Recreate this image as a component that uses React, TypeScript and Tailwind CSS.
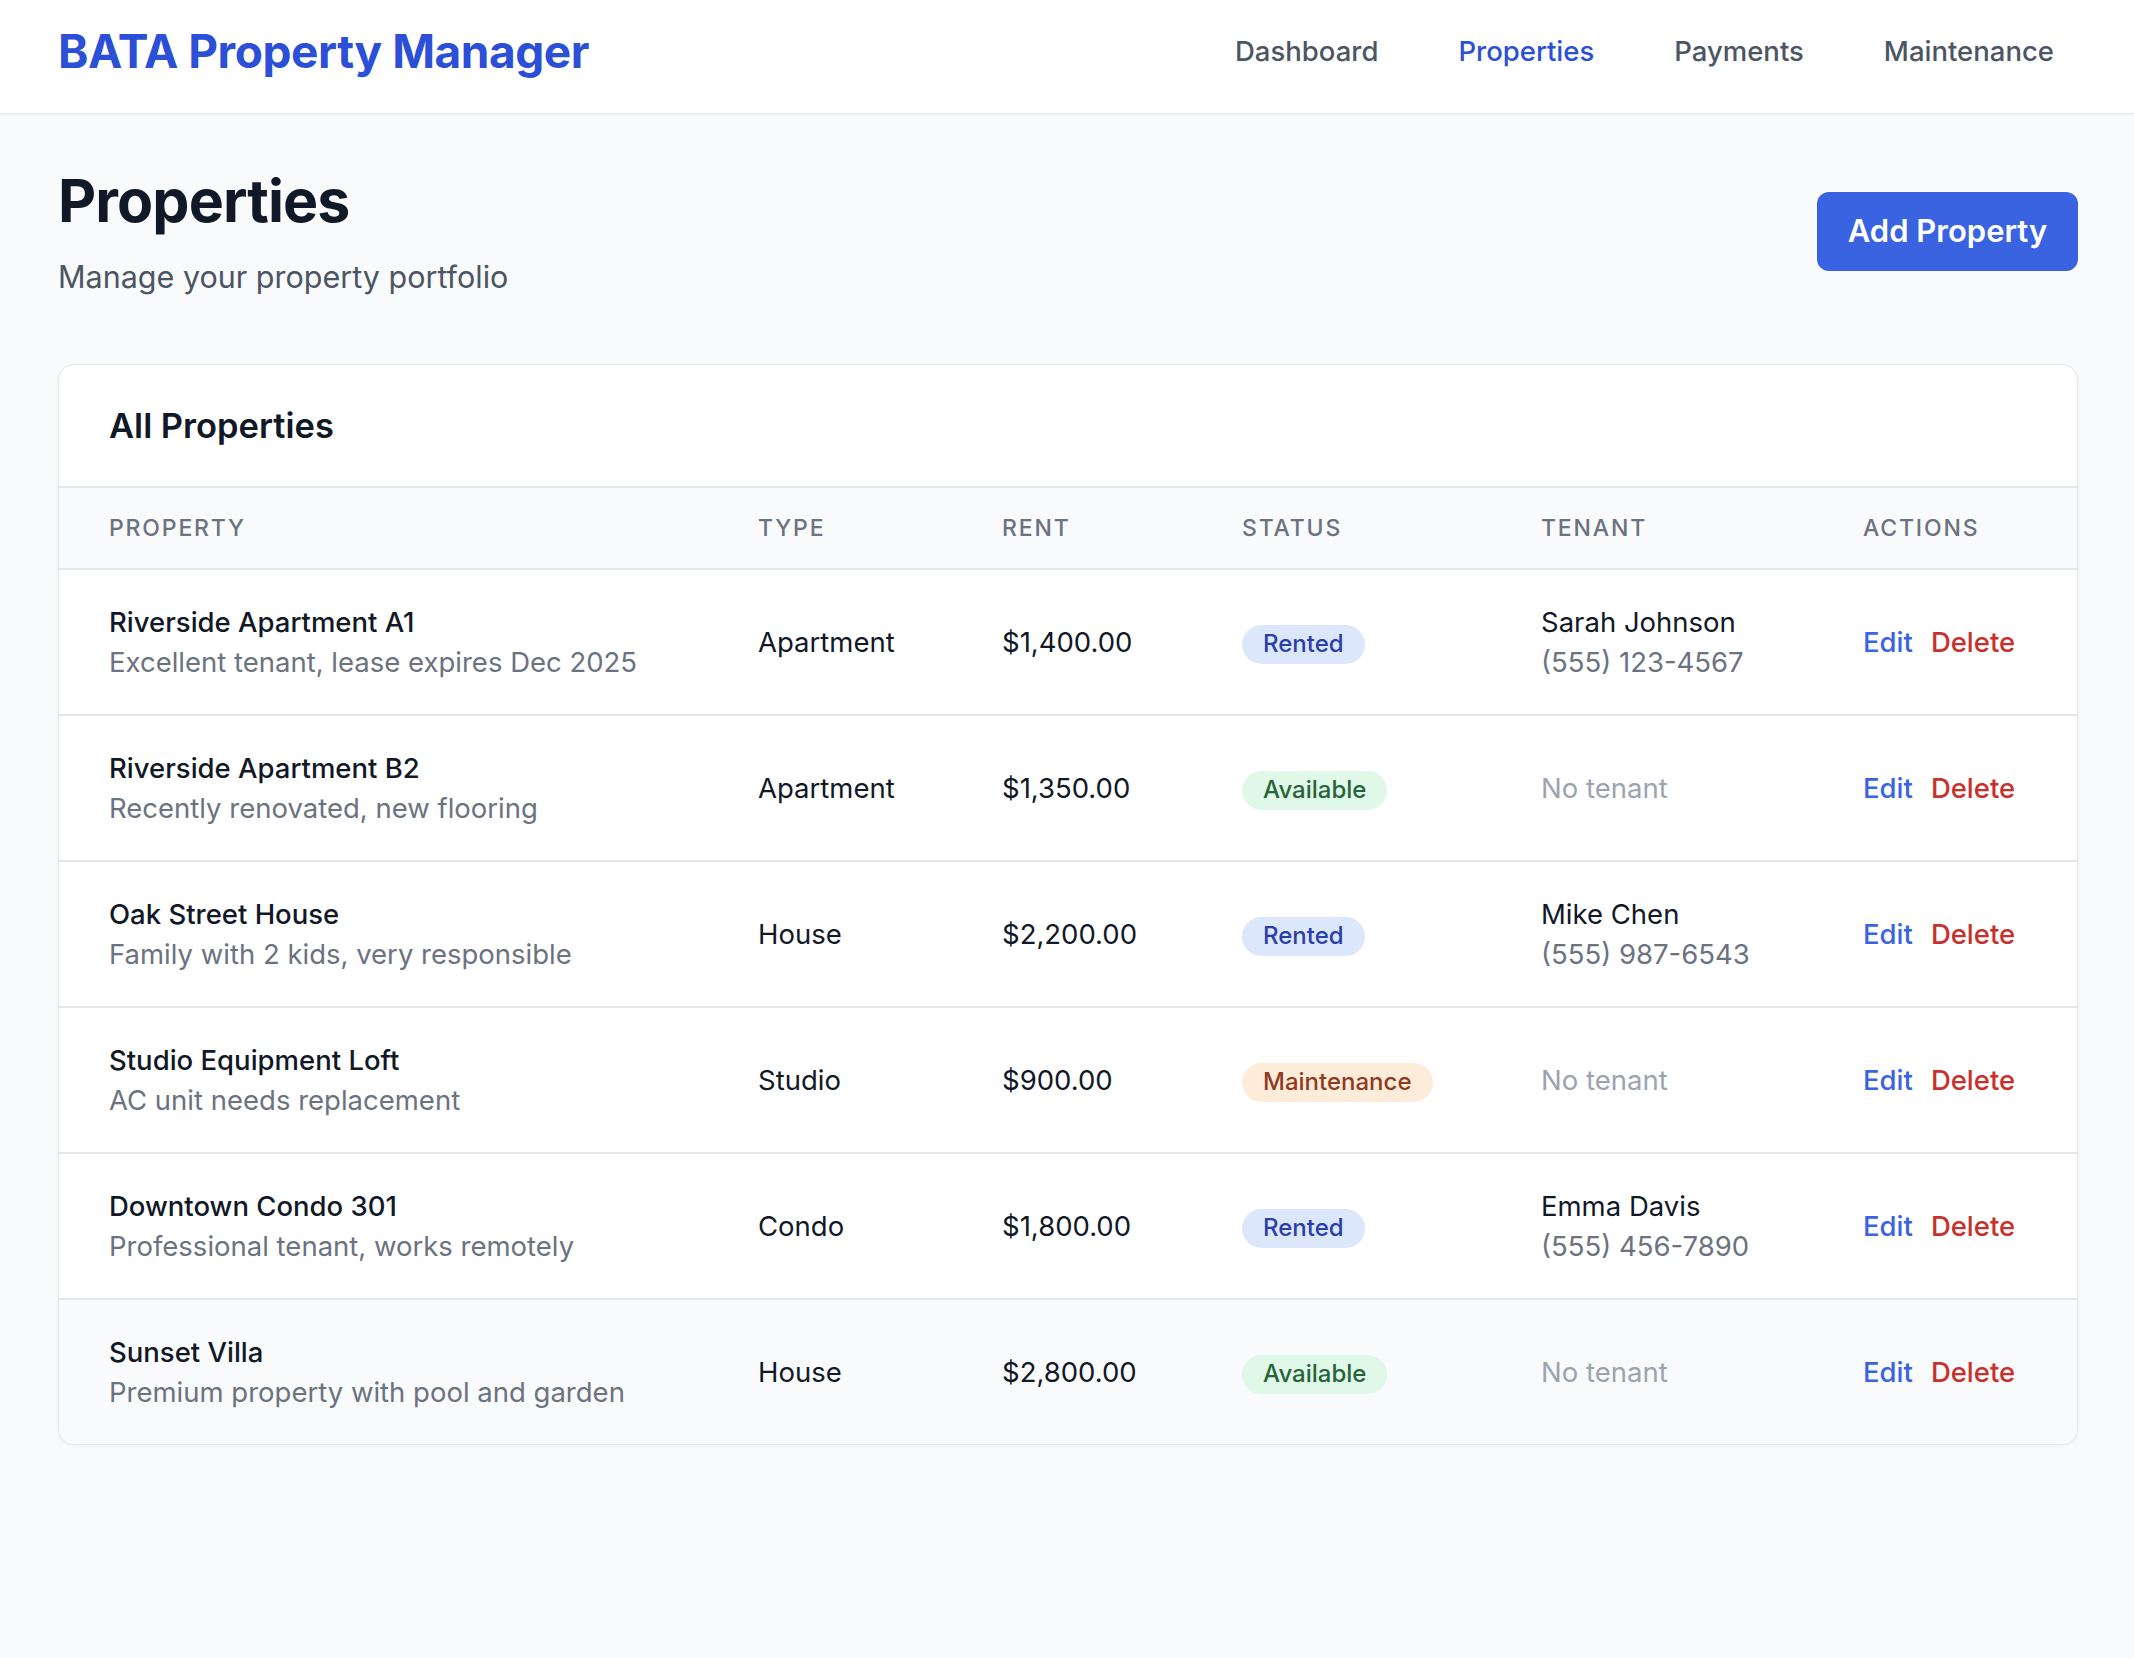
import React from "react";

type Status = "Rented" | "Available" | "Maintenance";

interface Property {
  name: string;
  note: string;
  type: string;
  rent: string;
  status: Status;
  tenant?: { name: string; phone: string };
}

const properties: Property[] = [
  { name: "Riverside Apartment A1", note: "Excellent tenant, lease expires Dec 2025", type: "Apartment", rent: "$1,400.00", status: "Rented", tenant: { name: "Sarah Johnson", phone: "(555) 123-4567" } },
  { name: "Riverside Apartment B2", note: "Recently renovated, new flooring", type: "Apartment", rent: "$1,350.00", status: "Available" },
  { name: "Oak Street House", note: "Family with 2 kids, very responsible", type: "House", rent: "$2,200.00", status: "Rented", tenant: { name: "Mike Chen", phone: "(555) 987-6543" } },
  { name: "Studio Equipment Loft", note: "AC unit needs replacement", type: "Studio", rent: "$900.00", status: "Maintenance" },
  { name: "Downtown Condo 301", note: "Professional tenant, works remotely", type: "Condo", rent: "$1,800.00", status: "Rented", tenant: { name: "Emma Davis", phone: "(555) 456-7890" } },
  { name: "Sunset Villa", note: "Premium property with pool and garden", type: "House", rent: "$2,800.00", status: "Available" },
];

function Badge({ status }: { status: Status }) {
  const cls =
    status === "Rented"
      ? "bg-[#dde7fb] text-[#2a3eac]"
      : status === "Available"
      ? "bg-[#e0f8e7] text-[#27633a]"
      : "bg-[#fcecd9] text-[#8e3b1f]";
  return (
    <span className={`inline-flex items-center h-[39px] px-[21px] rounded-full text-[24px] font-medium mt-[4px] ${cls}`}>
      {status}
    </span>
  );
}

const cols = "grid grid-cols-[649px_244px_240px_299px_322px_1fr]";

export default function App() {
  return (
    <div className="min-h-[1658px] bg-[#f9fafb] font-['Inter',sans-serif] text-[#111827]">
      <header className="bg-white h-[113px] shadow-[0_1px_3px_rgba(0,0,0,0.1)] relative z-10">
        <div className="flex items-center justify-between h-full px-[58px] pb-[12px]">
          <div className="text-[46px] font-bold text-[#2b4fd6] leading-[56px] tracking-[-0.01em]">BATA Property Manager</div>
          <nav className="flex items-center gap-[36px] text-[27.5px] font-medium leading-[40px]">
            <a className="px-[22px] text-[#4b5563]">Dashboard</a>
            <a className="px-[22px] text-[#2b4fd6]">Properties</a>
            <a className="px-[22px] text-[#4b5563]">Payments</a>
            <a className="px-[22px] text-[#4b5563]">Maintenance</a>
          </nav>
        </div>
      </header>

      <main className="pl-[58px] pr-[56px] pt-[52px]">
        <div className="flex items-center justify-between">
          <div className="flex flex-col gap-[20px]">
            <h1 className="text-[59px] font-bold leading-[72px] tracking-[-0.015em]">Properties</h1>
            <p className="text-[30.5px] leading-[40px] text-[#4b5563]">Manage your property portfolio</p>
          </div>
          <button className="h-[79px] w-[261px] rounded-[12px] bg-[#3a63e1] text-white text-[31px] font-semibold">
            Add Property
          </button>
        </div>

        <div className="mt-[67px] bg-white border border-[#e5e7eb] rounded-[16px] shadow-[0_1px_3px_rgba(0,0,0,0.06)] overflow-hidden">
          <div className="h-[121px] flex items-center px-[50px]">
            <h2 className="text-[34.5px] font-semibold leading-[44px]">All Properties</h2>
          </div>
          <div className={`${cols} h-[82px] items-center bg-[#f9fafb] border-t-2 border-[#e5e7eb] text-[23px] font-medium uppercase tracking-[0.08em] text-[#6b7280]`}>
            <div className="px-[50px]">Property</div>
            <div className="px-[50px]">Type</div>
            <div className="px-[50px]">Rent</div>
            <div className="px-[50px]">Status</div>
            <div className="px-[50px]">Tenant</div>
            <div className="px-[50px]">Actions</div>
          </div>
          {properties.map((p, i) => (
            <div
              key={p.name}
              className={`${cols} h-[146px] items-center border-t-2 border-[#e5e7eb] text-[27.5px] leading-[40px] ${i === properties.length - 1 ? "bg-[#f9fafb]" : "bg-white"}`}
            >
              <div className="px-[50px]">
                <div className="font-medium text-[#111827]">{p.name}</div>
                <div className="text-[#6b7280]">{p.note}</div>
              </div>
              <div className="px-[50px]">{p.type}</div>
              <div className="px-[50px]">{p.rent}</div>
              <div className="px-[50px]">
                <Badge status={p.status} />
              </div>
              <div className="px-[50px]">
                {p.tenant ? (
                  <>
                    <div className="text-[#111827]">{p.tenant.name}</div>
                    <div className="text-[#6b7280]">{p.tenant.phone}</div>
                  </>
                ) : (
                  <div className="text-[#9ca3af]">No tenant</div>
                )}
              </div>
              <div className="px-[50px] flex gap-[18px] font-medium">
                <a className="text-[#3a63e1]">Edit</a>
                <a className="text-[#c8302b]">Delete</a>
              </div>
            </div>
          ))}
        </div>
      </main>
    </div>
  );
}
